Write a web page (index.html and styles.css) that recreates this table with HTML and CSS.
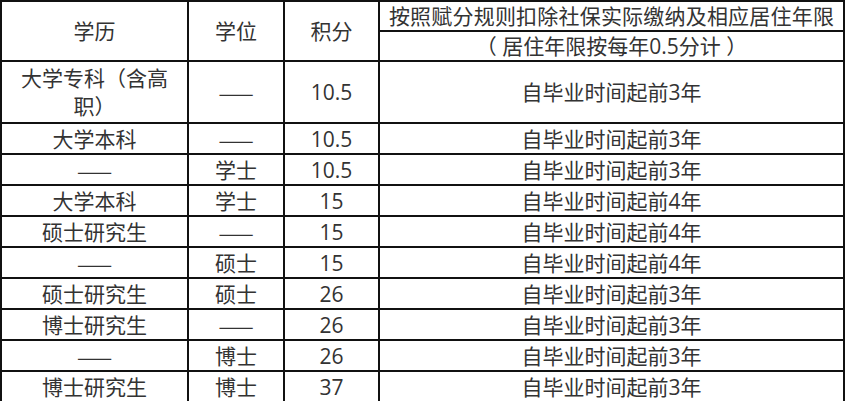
FILE: index.html
```html
<!DOCTYPE html>
<html lang="zh">
<head>
<meta charset="utf-8">
<link rel="stylesheet" href="styles.css">
</head>
<body>
<table class="score-table">
  <colgroup>
    <col class="c1"><col class="c2"><col class="c3"><col class="c4">
  </colgroup>
  <tr class="h1">
    <td rowspan="2">学历</td>
    <td rowspan="2">学位</td>
    <td rowspan="2">积分</td>
    <td class="long">按照赋分规则扣除社保实际缴纳及相应居住年限</td>
  </tr>
  <tr class="h2">
    <td>（ 居住年限按每年0.5分计 ）</td>
  </tr>
  <tr class="tall">
    <td class="wrap">大学专科（含高职）</td>
    <td class="dash">——</td>
    <td>10.5</td>
    <td>自毕业时间起前3年</td>
  </tr>
  <tr><td>大学本科</td><td class="dash">——</td><td>10.5</td><td>自毕业时间起前3年</td></tr>
  <tr><td class="dash">——</td><td>学士</td><td>10.5</td><td>自毕业时间起前3年</td></tr>
  <tr><td>大学本科</td><td>学士</td><td>15</td><td>自毕业时间起前4年</td></tr>
  <tr><td>硕士研究生</td><td class="dash">——</td><td>15</td><td>自毕业时间起前4年</td></tr>
  <tr><td class="dash">——</td><td>硕士</td><td>15</td><td>自毕业时间起前4年</td></tr>
  <tr><td>硕士研究生</td><td>硕士</td><td>26</td><td>自毕业时间起前3年</td></tr>
  <tr><td>博士研究生</td><td class="dash">——</td><td>26</td><td>自毕业时间起前3年</td></tr>
  <tr><td class="dash">——</td><td>博士</td><td>26</td><td>自毕业时间起前3年</td></tr>
  <tr><td>博士研究生</td><td>博士</td><td>37</td><td>自毕业时间起前3年</td></tr>
</table>
</body>
</html>
```

FILE: styles.css
```css
html, body {
  margin: 0;
  padding: 0;
  background: #ffffff;
}

.score-table {
  border-collapse: collapse;
  table-layout: fixed;
  width: 843px;
  font-family: "Open Sans", "Noto Sans CJK SC", sans-serif;
  font-size: 21px;
  color: #333333;
  text-spacing-trim: space-all;
}

.c1 { width: 187px; }
.c2 { width: 96px; }
.c3 { width: 95px; }
.c4 { width: 465px; }

.score-table td {
  border: 2px solid #111111;
  padding: 0;
  text-align: center;
  vertical-align: middle;
  height: 29px;
  line-height: 28px;
  white-space: nowrap;
}

.score-table .h1 td,
.score-table .h2 td {
  height: 28px;
}

.score-table .tall td {
  height: 60px;
}

.score-table td.wrap {
  white-space: normal;
  padding: 0 8px;
  line-height: 28px;
}

.score-table td.dash {
  font-family: "Noto Sans CJK SC", sans-serif;
  letter-spacing: 2px;
  text-indent: 2px;
}

.score-table td.long {
  letter-spacing: 0.2px;
}
```
